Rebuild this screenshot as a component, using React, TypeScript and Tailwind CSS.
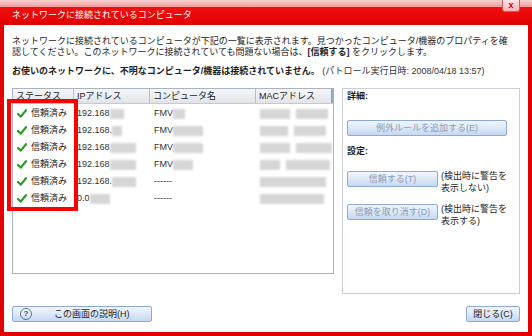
const rows = [
  { ip: "192.168", ipBlur: [14], name: "FMV", nameBlur: [12], mac: [30, 32] },
  { ip: "192.168.", ipBlur: [10], name: "FMV", nameBlur: [30], mac: [28, 32] },
  { ip: "192.168", ipBlur: [26], name: "FMV", nameBlur: [30], mac: [30, 36] },
  { ip: "192.168", ipBlur: [26], name: "FMV", nameBlur: [20], mac: [20, 44] },
  { ip: "192.168.", ipBlur: [24], name: "------", nameBlur: [], mac: [66] },
  { ip: "0.0", ipBlur: [20], name: "------", nameBlur: [], mac: [64] },
];

const Blur = ({ w }: { w: number }) => (
  <span className="inline-block h-[10px] bg-[#d6d6d6] blur-[1px]" style={{ width: w }} />
);

const Check = () => (
  <svg width="10" height="9" viewBox="0 0 10 9">
    <path d="M1 5 L3.8 7.6 L9 1.2" fill="none" stroke="#2f9a2a" strokeWidth="2.2" strokeLinecap="round" strokeLinejoin="round" />
  </svg>
);

const VistaButton = ({ label, disabled, className }: { label: string; disabled?: boolean; className: string }) => (
  <div
    className={`h-[16px] flex items-center justify-center rounded-[2px] border border-[#8eaad6] bg-gradient-to-b from-[#f1f6fd] via-[#dde8f8] to-[#c6d8f2] ${disabled ? "text-[#8d9cb3]" : "text-[#1a1a1a]"} ${className}`}
  >
    {label}
  </div>
);

export default function App() {
  return (
    <div className="relative w-[532px] h-[336px] flex flex-col bg-[#e40000] font-['Liberation_Sans','Noto_Sans_CJK_JP',sans-serif] text-[9px] leading-[11px] text-[#1e1e1e]">
      <div className="h-[7px] bg-gradient-to-b from-[#f7d2d2] to-[#f09a9a]" />
      <div className="h-[18px] flex items-center pl-[12px] pb-[2px] text-white bg-gradient-to-b from-[#f01010] to-[#e00000]">
        ネットワークに接続されているコンピュータ
      </div>

      <div className="absolute right-[12px] top-0 w-[18px] h-[12px] rounded-b-[3px] border border-t-0 border-[#c86060] bg-gradient-to-b from-[#fbe4e4] to-[#f2b2b2] flex items-center justify-center text-[#d00000] text-[9px] font-bold leading-none">
        x
      </div>

      <div className="flex-1 mx-[4px] mb-[4px] bg-white flex flex-col pt-[11px] px-[8px] pb-[10px]">
        <div>
          ネットワークに接続されているコンピュータが下記の一覧に表示されます。見つかったコンピュータ/機器のプロパティを確
          <br />
          認してください。このネットワークに接続されていても問題ない場合は、<span className="font-bold">[信頼する]</span> をクリックします。
        </div>
        <div className="mt-[8px]">
          <span className="font-bold">お使いのネットワークに、不明なコンピュータ/機器は接続されていません。</span>
          <span className="text-[#333]"> (パトロール実行日時: 2008/04/18 13:57)</span>
        </div>

        <div className="mt-[11px] flex gap-[8px] h-[206px]">
          <div className="w-[322px] h-[186px] border border-[#a9b3c2] flex flex-col">
            <div className="flex h-[15px] bg-gradient-to-b from-[#f6f7f9] to-[#e1e4e9] border-b border-[#c5cbd4]">
              <div className="w-[61px] pl-[3px] border-r border-[#b8bec8] flex items-center">ステータス</div>
              <div className="w-[76px] pl-[3px] border-r border-[#b8bec8] flex items-center">IPアドレス</div>
              <div className="w-[106px] pl-[3px] border-r border-[#b8bec8] flex items-center">コンピュータ名</div>
              <div className="flex-1 pl-[3px] flex items-center border-r-2 border-[#8fa7cf]">MACアドレス</div>
            </div>
            <div className="pt-[1px] flex flex-col">
              {rows.map((r, i) => (
                <div key={i} className="flex h-[17px] items-center">
                  <div className="w-[61px] pl-[4px] flex items-center gap-[4px]">
                    <Check />
                    <span>信頼済み</span>
                  </div>
                  <div className="w-[76px] pl-[3px] flex items-center text-[#333]">
                    <span>{r.ip}</span>
                    {r.ipBlur.map((w, j) => (
                      <Blur key={j} w={w} />
                    ))}
                  </div>
                  <div className="w-[106px] pl-[4px] flex items-center text-[#333]">
                    <span>{r.name}</span>
                    {r.nameBlur.map((w, j) => (
                      <Blur key={j} w={w} />
                    ))}
                  </div>
                  <div className="flex-1 pl-[4px] flex items-center gap-[6px]">
                    {r.mac.map((w, j) => (
                      <Blur key={j} w={w} />
                    ))}
                  </div>
                </div>
              ))}
            </div>
          </div>

          <div className="w-[178px] border border-[#c9cfd8] flex flex-col pl-[4px] pt-[2px]">
            <div className="font-bold">詳細:</div>
            <VistaButton label="例外ルールを追加する(E)" disabled className="w-[160px] mt-[18px]" />
            <div className="font-bold mt-[10px]">設定:</div>
            <div className="flex mt-[13px] gap-[3px]">
              <VistaButton label="信頼する(T)" disabled className="w-[91px] mt-[1px]" />
              <div className="leading-[12px]">
                (検出時に警告を
                <br />
                表示しない)
              </div>
            </div>
            <div className="flex mt-[9px] gap-[3px]">
              <VistaButton label="信頼を取り消す(D)" disabled className="w-[91px] mt-[1px]" />
              <div className="leading-[12px]">
                (検出時に警告を
                <br />
                表示する)
              </div>
            </div>
          </div>
        </div>

        <div className="mt-[12px] flex justify-between">
          <div className="w-[140px] h-[16px] flex items-center rounded-[2px] border border-[#8eaad6] bg-gradient-to-b from-[#f1f6fd] via-[#dde8f8] to-[#c6d8f2]">
            <div className="ml-[7px] w-[12px] h-[12px] rounded-full border border-[#56739e] bg-gradient-to-b from-white to-[#c9d8ee] flex items-center justify-center text-[8px] font-bold leading-none text-[#2a4a80]">
              ?
            </div>
            <span className="ml-[22px]">この画面の説明(H)</span>
          </div>
          <VistaButton label="閉じる(C)" className="w-[54px]" />
        </div>
      </div>

      <div className="absolute left-[7px] top-[99px] w-[71px] h-[112px] border-4 border-[#ff0000]" />
    </div>
  );
}
